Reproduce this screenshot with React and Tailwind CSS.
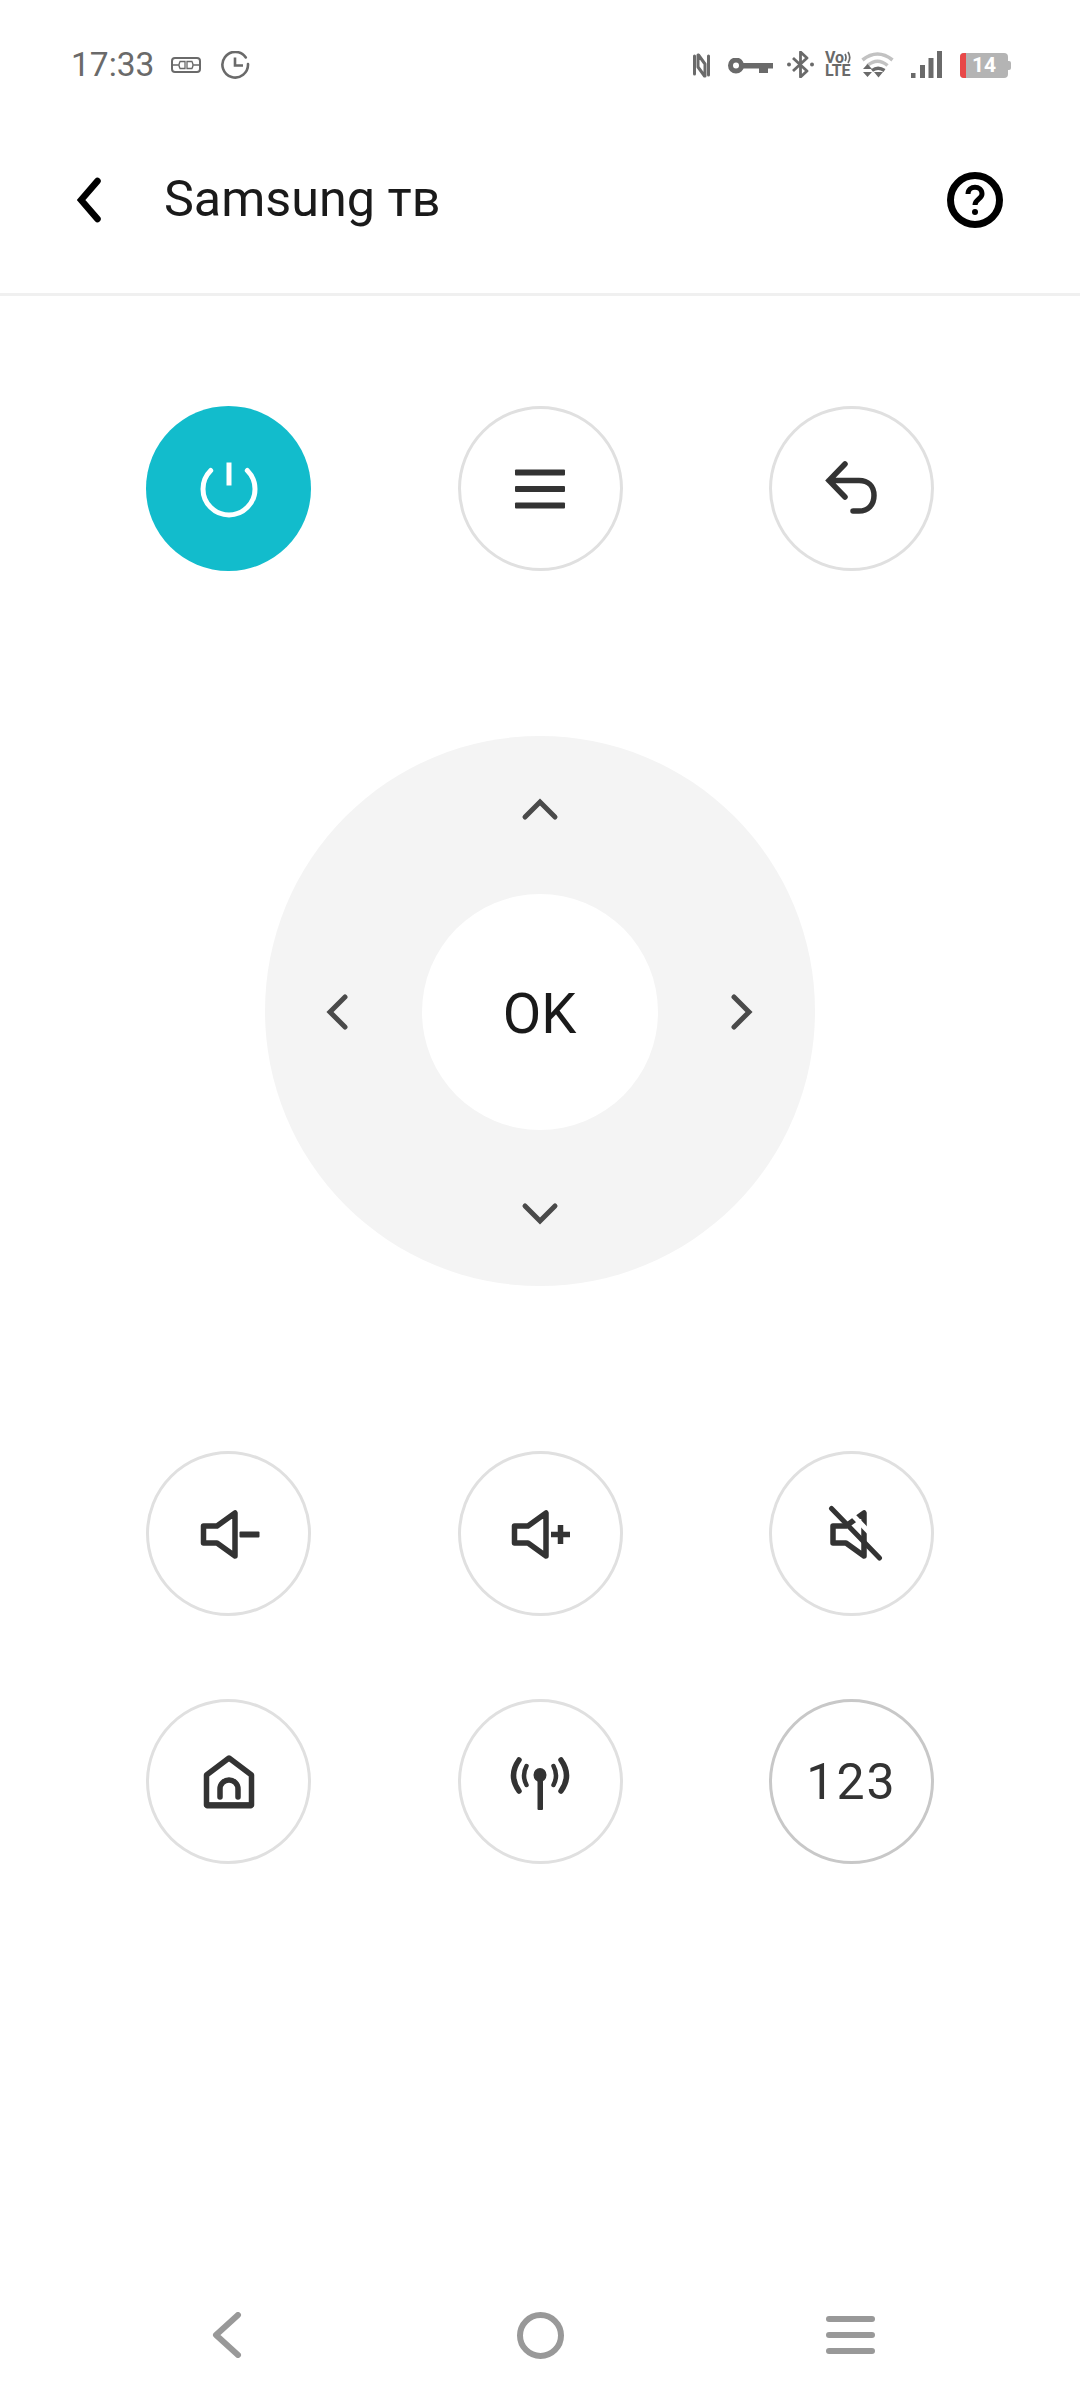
import React from "react";

const DARK = "#333333";

function Circle({ children, border = "border-[#e0e0e0]", fill = "" }) {
  return (
    <button className={`w-[165px] h-[165px] shrink-0 rounded-full flex items-center justify-center ${fill || `border-[3px] ${border}`}`}>
      {children}
    </button>
  );
}

function Row({ children, className = "" }) {
  return <div className={`flex pl-[146px] gap-[146.5px] ${className}`}>{children}</div>;
}

function Ico({ children }) {
  return (
    <svg width="100" height="100" viewBox="0 0 100 100" fill="none" stroke={DARK} strokeWidth="5.5" strokeLinejoin="round" strokeLinecap="round">
      {children}
    </svg>
  );
}

function Chevron({ d }) {
  return (
    <svg width="40" height="40" viewBox="0 0 40 40" fill="none" stroke="#4a4a4a" strokeWidth="5" strokeLinecap="round" strokeLinejoin="miter" className="shrink-0">
      <path d={d} />
    </svg>
  );
}

const speaker = "M24.5 42 H38 L56 29 V72 L38 59 H24.5 Z";

function StatusBar() {
  const c = "#6a6a6a";
  return (
    <div className="h-[100px] shrink-0 flex items-start pt-[51px] text-[#6a6a6a]">
      <div className="ml-[71px] h-[28px] flex items-center text-[33.5px] leading-none w-[85px]">17:33</div>
      <svg width="30" height="16" viewBox="0 0 30 16" fill="none" stroke={c} className="ml-[15px] mt-[6px]">
        <rect x="1" y="1" width="28" height="14" rx="3" strokeWidth="2" />
        <path d="M1 8 H8 M22 8 H29 M9 4.5 H14 V11.5 H9 Q7 8 9 4.5 Z M21 4.5 H16 V11.5 H21 Q23 8 21 4.5 Z" strokeWidth="1.3" />
      </svg>
      <svg width="29" height="28" viewBox="0 0 29 28" fill="none" stroke={c} strokeWidth="2.6" className="ml-[20px]">
        <path d="M24.8 6.5 A12.8 12.8 0 1 0 27 13" strokeLinecap="round" />
        <path d="M14 6.5 V14.5 H22" />
      </svg>

      <svg width="17" height="25" viewBox="0 0 17 25" fill="none" stroke={c} strokeWidth="3" strokeLinejoin="round" strokeLinecap="round" className="ml-[443px] mt-[2px]">
        <path d="M5.5 2 L12 11 V23 M1.5 3 V21 M15.5 3 V22 M11.5 23 L5 14 V2" />
      </svg>
      <svg width="45" height="16" viewBox="0 0 45 16" className="ml-[18px] mt-[7px]" fill={c}>
        <circle cx="8" cy="7.5" r="5.5" fill="none" stroke={c} strokeWidth="5" />
        <rect x="14" y="5" width="31" height="5.5" />
        <rect x="31" y="7" width="9" height="8" />
      </svg>
      <svg width="27" height="27" viewBox="0 0 27 27" fill="none" stroke={c} strokeWidth="2.8" className="ml-[14px]">
        <path d="M6 7 L20 20 L13.5 26 V1 L20 7 L6 20" strokeLinejoin="round" />
        <circle cx="2" cy="13.5" r="2" fill={c} stroke="none" />
        <circle cx="25" cy="13.5" r="2" fill={c} stroke="none" />
      </svg>
      <div className="ml-[11px] w-[27px] h-[27px] flex flex-col font-bold text-[16px] leading-[13px] tracking-[-0.2px]">
        <div className="flex items-center h-[13px]">
          <span>Vo</span>
          <svg width="8" height="13" viewBox="0 0 8 13" fill="none" stroke={c} strokeWidth="1.7">
            <path d="M1 3 Q3 6.5 1 10 M4 1 Q7.5 6.5 4 12" />
          </svg>
        </div>
        <span>LTE</span>
      </div>
      <svg width="33" height="27" viewBox="0 0 33 27" fill="none" className="ml-[9px]">
        <path d="M1.5 9 Q16.5 -3 31.5 9" stroke="#c2c2c2" strokeWidth="3.6" />
        <path d="M6.5 14.5 Q16.5 6 26.5 14.5" stroke="#c2c2c2" strokeWidth="3.6" />
        <path d="M11 19.5 Q17 15 23.5 19.5" stroke={c} strokeWidth="3.4" />
        <path d="M2 18 L6.5 13 L11 18 Z M2 21 L6.5 26 L11 21 Z M13 21 L22 21 L17.5 26.5 Z" fill={c} />
      </svg>
      <svg width="31" height="27" viewBox="0 0 31 27" fill={c} className="ml-[17px]">
        <rect x="0" y="22" width="4.5" height="5" />
        <rect x="9" y="14" width="5" height="13" />
        <rect x="17.5" y="7" width="5" height="20" />
        <rect x="26" y="0" width="5" height="27" />
      </svg>
      <div className="ml-[18px] mt-[2px] flex items-center">
        <div className="w-[48px] h-[25px] rounded-[4px] bg-[#b4b4b4] overflow-hidden flex items-center">
          <div className="w-[6px] h-full bg-[#e84848] shrink-0" />
          <span className="ml-[6px] text-white font-bold text-[21px] leading-none">14</span>
        </div>
        <div className="w-[3px] h-[9px] bg-[#b4b4b4] rounded-r-[2px]" />
      </div>
    </div>
  );
}

function Header() {
  return (
    <div className="h-[196px] shrink-0 flex items-start pt-[72px] pl-[77px] pr-[77px] border-b-[3px] border-[#f0f0f0]">
      <svg width="24" height="56" viewBox="0 0 24 56" fill="none" stroke="#000" strokeWidth="6.5" strokeLinecap="round" strokeLinejoin="miter" className="shrink-0">
        <path d="M20.5 9 L4 28 L20.5 47" />
      </svg>
      <span className="ml-[63px] h-[54px] flex items-center text-[50.3px] leading-none text-[#1a1a1a] whitespace-nowrap">Samsung тв</span>
      <svg width="56" height="56" viewBox="0 0 56 56" fill="none" className="ml-auto shrink-0">
        <circle cx="28" cy="28" r="24.5" stroke="#000" strokeWidth="7" />
        <path d="M21 22 C21 13 35 13 35 22 C35 27 28 27 28 33" stroke="#000" strokeWidth="5" />
        <circle cx="28" cy="40" r="3" fill="#000" />
      </svg>
    </div>
  );
}

function DPad() {
  return (
    <div className="mt-[165px] mx-auto w-[550px] h-[550px] shrink-0 rounded-full bg-[#f4f4f4] flex flex-col items-center justify-between pt-[53px] pb-[52px]">
      <Chevron d="M5 28 L20 13 L35 28" />
      <div className="w-full flex items-center justify-between pl-[52px] pr-[53px]">
        <Chevron d="M28 5 L13 20 L28 35" />
        <div className="w-[236px] h-[236px] rounded-full bg-white flex items-center justify-center pt-[5px] text-[56px] leading-none text-[#1a1a1a]">OK</div>
        <Chevron d="M12 5 L27 20 L12 35" />
      </div>
      <Chevron d="M5 12 L20 27 L35 12" />
    </div>
  );
}

function Nav() {
  const s = "#999999";
  return (
    <div className="mt-auto flex pl-[146px] gap-[146.5px] pb-[27px]">
      <div className="w-[165px] h-[60px] flex items-center justify-center pr-[3px]">
        <svg width="30" height="46" viewBox="0 0 30 46" fill="none" stroke={s} strokeWidth="6" strokeLinecap="round" strokeLinejoin="round">
          <path d="M26 3 L4 23 L26 43" />
        </svg>
      </div>
      <div className="w-[165px] h-[60px] flex items-center justify-center">
        <div className="w-[47px] h-[47px] rounded-full border-[6px] border-[#999999]" />
      </div>
      <div className="w-[165px] h-[60px] flex flex-col items-center justify-center gap-[9.5px] pr-[2px]">
        <div className="w-[49px] h-[6.5px] rounded-full bg-[#999999]" />
        <div className="w-[49px] h-[6.5px] rounded-full bg-[#999999]" />
        <div className="w-[49px] h-[6.5px] rounded-full bg-[#999999]" />
      </div>
    </div>
  );
}

export default function App() {
  return (
    <div className="w-[1080px] h-[2392px] bg-white flex flex-col overflow-hidden font-['Roboto',sans-serif]">
      <StatusBar />
      <Header />

      <Row className="mt-[110px]">
        <Circle fill="bg-[#12bccc]">
          <svg width="100" height="100" viewBox="0 0 100 100" fill="none" stroke="#fff" strokeWidth="5" strokeLinecap="round">
            <path d="M31.7 31.5 A26 26 0 1 0 68.3 31.5" />
            <path d="M50 23.5 V46.5" strokeLinecap="butt" />
          </svg>
        </Circle>
        <Circle>
          <svg width="100" height="100" viewBox="0 0 100 100" fill={DARK}>
            <rect x="25" y="30.5" width="50" height="6" rx="1" />
            <rect x="25" y="47" width="50" height="6" rx="1" />
            <rect x="25" y="63.5" width="50" height="6" rx="1" />
          </svg>
        </Circle>
        <Circle>
          <Ico>
            <path d="M43 25 L27 41.5 L43 58 M27 41.5 H57 C66 41.5 72 47 72 56.5 C72 66 66 72 57 72 H51" strokeLinejoin="miter" />
          </Ico>
        </Circle>
      </Row>

      <DPad />

      <Row className="mt-[165px]">
        <Circle>
          <Ico>
            <path d={speaker} />
            <rect x="60.5" y="47.5" width="20" height="6" rx="1" fill={DARK} stroke="none" />
          </Ico>
        </Circle>
        <Circle>
          <Ico>
            <path d={speaker} />
            <path d="M61 50.5 H80 M70.5 41 V60" strokeLinecap="butt" />
          </Ico>
        </Circle>
        <Circle>
          <Ico>
            <path d="M31 42 H44 L62 29 V72 L44 59 H31 Z" />
            <path d="M36 24 L84 74" stroke="#fff" strokeWidth="5" transform="translate(4 -4)" strokeLinecap="butt" />
            <path d="M29.5 24.5 L77.5 74" strokeWidth="5" />
          </Ico>
        </Circle>
      </Row>

      <Row className="mt-[83px]">
        <Circle>
          <Ico>
            <path d="M27.5 43 L50 26 L72.5 43 V73 H27.5 Z" />
            <rect x="26" y="70.5" width="48" height="6" rx="2" fill={DARK} stroke="none" />
            <path d="M41 65 V57 A9 9 0 0 1 59 57 V65" />
          </Ico>
        </Circle>
        <Circle>
          <svg width="100" height="100" viewBox="0 0 100 100" fill="none" stroke={DARK} strokeLinecap="round">
            <path d="M29 28 Q18 43.5 29 59 M71 28 Q82 43.5 71 59" strokeWidth="5.5" />
            <path d="M36.5 34 Q31.5 43.5 36.5 53 M63.5 34 Q68.5 43.5 63.5 53" strokeWidth="4.5" />
            <ellipse cx="50" cy="43" rx="6.5" ry="7" fill={DARK} stroke="none" />
            <rect x="47.5" y="47" width="5.5" height="31" rx="1" fill={DARK} stroke="none" />
          </svg>
        </Circle>
        <Circle border="border-[#c8c8c8]">
          <span className="text-[50px] leading-none tracking-[2px] text-[#333333]">123</span>
        </Circle>
      </Row>

      <Nav />
    </div>
  );
}
